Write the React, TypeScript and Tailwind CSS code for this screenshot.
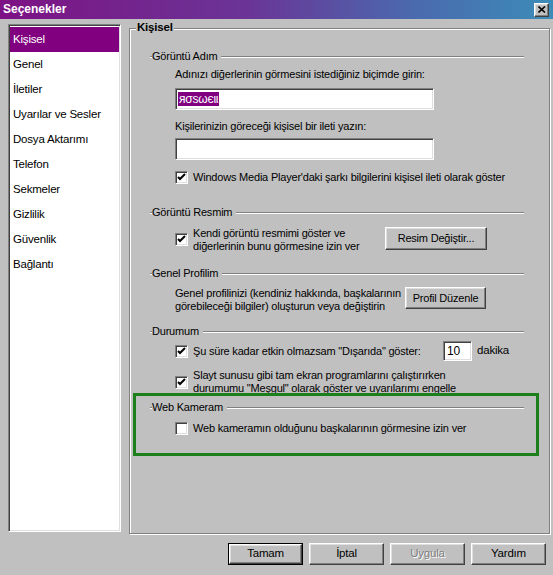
import React from "react";

const sunken =
  "border border-t-[#808080] border-l-[#808080] border-b-white border-r-white shadow-[inset_1px_1px_0_#404040,inset_-1px_-1px_0_#dfdfdf]";
const raised =
  "border border-t-white border-l-white border-b-[#404040] border-r-[#404040] shadow-[inset_-1px_-1px_0_#808080,inset_1px_1px_0_#dfdfdf]";

function Check({ on }: { on?: boolean }) {
  return (
    <div className={`w-[13px] h-[13px] shrink-0 bg-white ${sunken} flex items-center justify-center`}>
      {on && (
        <svg width="9" height="9" viewBox="0 0 9 9">
          <path d="M1 4 L3 6 L8 1" stroke="#000" strokeWidth="2" fill="none" />
        </svg>
      )}
    </div>
  );
}

function Hdr({ t, mt }: { t: string; mt: string }) {
  return (
    <div className={`flex items-center h-[13px] ml-[20px] mr-[25px] ${mt}`}>
      <div className="w-[2px] h-[2px] border-t border-t-[#808080] border-b border-b-white" />
      <span className="leading-[13px] whitespace-nowrap">{t}</span>
      <div className="flex-1 ml-[4px] h-[2px] border-t border-t-[#808080] border-b border-b-white" />
    </div>
  );
}

function Btn({ children, cls, def, dis }: { children: React.ReactNode; cls: string; def?: boolean; dis?: boolean }) {
  const inner = (
    <div
      className={`w-full h-full flex items-center justify-center ${raised} ${
        dis ? "text-[#808080] [text-shadow:1px_1px_0_#fff]" : "text-black"
      }`}
    >
      {children}
    </div>
  );
  return def ? (
    <div className={`border border-black ${cls}`}>{inner}</div>
  ) : (
    <div className={cls}>{inner}</div>
  );
}

const items = [
  "Kişisel",
  "Genel",
  "İletiler",
  "Uyarılar ve Sesler",
  "Dosya Aktarımı",
  "Telefon",
  "Sekmeler",
  "Gizlilik",
  "Güvenlik",
  "Bağlantı",
];

export default function App() {
  return (
    <div className="relative w-[553px] h-[575px] bg-[#c0c0c0] overflow-hidden font-['Liberation_Sans',Arial,sans-serif] text-[11px] tracking-[-0.2px] text-black flex flex-col">
      {/* title bar */}
      <div className="h-[19px] shrink-0 flex items-center bg-[linear-gradient(90deg,#7d1284_0%,#6a3596_45%,#4a6aae_75%,#3c8cb8_100%)]">
        <span className="ml-[3px] text-white font-bold text-[12px] tracking-normal leading-[19px]">Seçenekler</span>
        <div className={`ml-auto mr-[4px] w-[15px] h-[14px] bg-[#c0c0c0] ${raised} flex items-center justify-center`}>
          <svg width="8" height="7" viewBox="0 0 8 7">
            <path d="M0.5 0.5 L7 6.5 M7 0.5 L0.5 6.5" stroke="#000" strokeWidth="1.6" />
          </svg>
        </div>
      </div>

      {/* main */}
      <div className="flex pl-[8px] pt-[5px]">
        <div className={`w-[113px] h-[508px] bg-white ${sunken} pt-[2px] px-[1px]`}>
          {items.map((it, i) => (
            <div
              key={it}
              className={`h-[25px] flex items-center pl-[3px] text-[11.5px] whitespace-nowrap ${
                i === 0 ? "bg-[#800080] text-white" : ""
              }`}
            >
              {it}
            </div>
          ))}
        </div>

        <div className="ml-[8px] mt-[4px] w-[421px] h-[506px] border border-[#808080] shadow-[inset_1px_1px_0_#fff,1px_1px_0_#fff] flex flex-col">
          <div className="-mt-[8px] ml-[6px] w-fit px-[1px] bg-[#c0c0c0] font-bold text-[11.5px] leading-[13px]">
            Kişisel
          </div>

          <Hdr t="Görüntü Adım" mt="mt-[16px]" />
          <div className="ml-[45px] mt-[5px] leading-[13px]">
            Adınızı diğerlerinin görmesini istediğiniz biçimde girin:
          </div>
          <div className={`ml-[45px] mt-[7px] w-[259px] h-[22px] bg-white ${sunken} flex items-center pl-[2px]`}>
            <span className="bg-[#800080] text-white px-[1px] leading-[14px] text-[12px]">яσѕωєιι</span>
          </div>
          <div className="ml-[45px] mt-[10px] leading-[13px]">Kişilerinizin göreceği kişisel bir ileti yazın:</div>
          <div className={`ml-[45px] mt-[5px] w-[259px] h-[22px] bg-white ${sunken}`} />
          <div className="ml-[45px] mt-[11px] flex items-center h-[13px]">
            <Check on />
            <span className="ml-[5px] whitespace-nowrap">
              Windows Media Player'daki şarkı bilgilerini kişisel ileti olarak göster
            </span>
          </div>

          <Hdr t="Görüntü Resmim" mt="mt-[22px]" />
          <div className="ml-[45px] mt-[8px] flex h-[27px]">
            <div className="mt-[6px]">
              <Check on />
            </div>
            <div className="ml-[5px] w-[192px] leading-[13px] whitespace-nowrap">
              <div>Kendi görüntü resmimi göster ve</div>
              <div>diğerlerinin bunu görmesine izin ver</div>
            </div>
            <Btn cls="w-[102px] h-[23px]">Resim Değiştir...</Btn>
          </div>

          <Hdr t="Genel Profilim" mt="mt-[13px]" />
          <div className="ml-[45px] mt-[7px] flex h-[26px]">
            <div className="w-[230px] leading-[13px] whitespace-nowrap">
              <div>Genel profilinizi (kendiniz hakkında, başkalarının</div>
              <div>görebileceği bilgiler) oluşturun veya değiştirin</div>
            </div>
            <Btn cls="w-[81px] h-[22px]">Profil Düzenle</Btn>
          </div>

          <Hdr t="Durumum" mt="mt-[12px]" />
          <div className="ml-[45px] mt-[3px] flex items-center h-[20px]">
            <Check on />
            <span className="ml-[5px] w-[250px] whitespace-nowrap">
              Şu süre kadar etkin olmazsam "Dışarıda" göster:
            </span>
            <div className={`w-[29px] h-[20px] bg-white ${sunken} flex items-center pl-[3px] text-[12px]`}>10</div>
            <span className="ml-[5px] text-[11.5px]">dakika</span>
          </div>
          <div className="ml-[45px] mt-[8px] flex items-center h-[26px]">
            <Check on />
            <div className="ml-[5px] leading-[13px] whitespace-nowrap">
              <div>Slayt sunusu gibi tam ekran programlarını çalıştırırken</div>
              <div>durumumu "Meşgul" olarak göster ve uyarılarımı engelle</div>
            </div>
          </div>

          <Hdr t="Web Kameram" mt="mt-[6px]" />
          <div className="ml-[45px] mt-[8px] flex items-center h-[13px]">
            <Check />
            <span className="ml-[5px] whitespace-nowrap">Web kameramın olduğunu başkalarının görmesine izin ver</span>
          </div>
        </div>
      </div>

      {/* bottom buttons */}
      <div className="mt-[9px] flex justify-end pr-[7px] gap-[6px] text-[11.5px]">
        <Btn cls="w-[75px] h-[22px]" def>
          Tamam
        </Btn>
        <Btn cls="w-[75px] h-[22px]">İptal</Btn>
        <Btn cls="w-[75px] h-[22px]" dis>
          Uygula
        </Btn>
        <Btn cls="w-[75px] h-[22px]">Yardım</Btn>
      </div>

      {/* green annotation */}
      <div className="absolute left-[133px] top-[393px] w-[406px] h-[63px] border-[3px] border-[#1b801b] pointer-events-none" />
    </div>
  );
}
